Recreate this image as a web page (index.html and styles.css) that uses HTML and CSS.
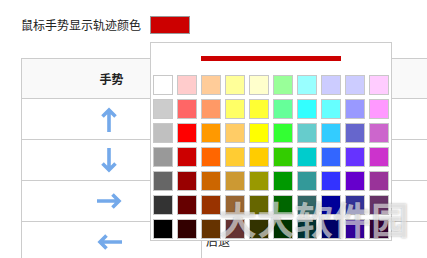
FILE: index.html
```html
<!DOCTYPE html>
<html lang="zh-CN">
<head>
<meta charset="utf-8">
<title>鼠标手势</title>
<link rel="stylesheet" href="styles.css">
</head>
<body>
<div class="setting">
  <span class="label">鼠标手势显示轨迹颜色</span>
  <span class="swatch"></span>
</div>

<div class="gtable">
  <div class="row head">
    <div class="c1">手势</div>
    <div class="c2">动作</div>
  </div>
  <div class="row">
    <div class="c1"><svg class="arrow v" width="16" height="25" viewBox="0 0 16 25"><path d="M8 3V25M1.5 9.5L8 3L14.5 9.5"/></svg></div>
    <div class="c2">向上滚动</div>
  </div>
  <div class="row">
    <div class="c1"><svg class="arrow v" width="16" height="25" viewBox="0 0 16 25"><path d="M8 0V22M1.5 15.5L8 22L14.5 15.5"/></svg></div>
    <div class="c2">向下滚动</div>
  </div>
  <div class="row">
    <div class="c1"><svg class="arrow h" width="25" height="16" viewBox="0 0 25 16"><path d="M0 8H22M15.5 1.5L22 8L15.5 14.5"/></svg></div>
    <div class="c2">前进</div>
  </div>
  <div class="row">
    <div class="c1"><svg class="arrow h" width="25" height="16" viewBox="0 0 25 16"><path d="M25 8H3M9.5 1.5L3 8L9.5 14.5"/></svg></div>
    <div class="c2">后退</div>
  </div>
</div>

<div class="picker">
  <div class="current"></div>
  <div class="grid">
    <span class="sw" style="background:#ffffff"></span><span class="sw" style="background:#ffcccc"></span><span class="sw" style="background:#ffcc99"></span><span class="sw" style="background:#ffff99"></span><span class="sw" style="background:#ffffcc"></span><span class="sw" style="background:#99ff99"></span><span class="sw" style="background:#99ffff"></span><span class="sw" style="background:#ccccff"></span><span class="sw" style="background:#ccccff"></span><span class="sw" style="background:#ffccff"></span>
    <span class="sw" style="background:#cccccc"></span><span class="sw" style="background:#ff6666"></span><span class="sw" style="background:#ff9966"></span><span class="sw" style="background:#ffff66"></span><span class="sw" style="background:#ffff33"></span><span class="sw" style="background:#66ff99"></span><span class="sw" style="background:#33ffff"></span><span class="sw" style="background:#66ffff"></span><span class="sw" style="background:#9999ff"></span><span class="sw" style="background:#ff99ff"></span>
    <span class="sw" style="background:#c0c0c0"></span><span class="sw" style="background:#ff0000"></span><span class="sw" style="background:#ff9900"></span><span class="sw" style="background:#ffcc66"></span><span class="sw" style="background:#ffff00"></span><span class="sw" style="background:#33ff33"></span><span class="sw" style="background:#66cccc"></span><span class="sw" style="background:#33ccff"></span><span class="sw" style="background:#6666cc"></span><span class="sw" style="background:#cc66cc"></span>
    <span class="sw" style="background:#999999"></span><span class="sw" style="background:#cc0000"></span><span class="sw" style="background:#ff6600"></span><span class="sw" style="background:#ffcc33"></span><span class="sw" style="background:#ffcc00"></span><span class="sw" style="background:#33cc00"></span><span class="sw" style="background:#00cccc"></span><span class="sw" style="background:#3366ff"></span><span class="sw" style="background:#6633ff"></span><span class="sw" style="background:#cc33cc"></span>
    <span class="sw" style="background:#666666"></span><span class="sw" style="background:#990000"></span><span class="sw" style="background:#cc6600"></span><span class="sw" style="background:#cc9933"></span><span class="sw" style="background:#999900"></span><span class="sw" style="background:#009900"></span><span class="sw" style="background:#339999"></span><span class="sw" style="background:#3333ff"></span><span class="sw" style="background:#6600cc"></span><span class="sw" style="background:#993399"></span>
    <span class="sw" style="background:#333333"></span><span class="sw" style="background:#660000"></span><span class="sw" style="background:#993300"></span><span class="sw" style="background:#996633"></span><span class="sw" style="background:#666600"></span><span class="sw" style="background:#006600"></span><span class="sw" style="background:#336666"></span><span class="sw" style="background:#000099"></span><span class="sw" style="background:#333399"></span><span class="sw" style="background:#663366"></span>
    <span class="sw" style="background:#000000"></span><span class="sw" style="background:#330000"></span><span class="sw" style="background:#663300"></span><span class="sw" style="background:#663333"></span><span class="sw" style="background:#333300"></span><span class="sw" style="background:#003300"></span><span class="sw" style="background:#003333"></span><span class="sw" style="background:#000066"></span><span class="sw" style="background:#330099"></span><span class="sw" style="background:#330033"></span>
  </div>
</div>

<div class="watermark">大大软件园</div>
</body>
</html>
```

FILE: styles.css
```css
html, body {
  margin: 0;
  padding: 0;
  background: #ffffff;
  overflow: hidden;
}
body {
  width: 427px;
  height: 258px;
  position: relative;
  font-family: "Noto Sans CJK SC", "Noto Sans", sans-serif;
  font-size: 12px;
  color: #222222;
}

.setting {
  display: flex;
  align-items: center;
  gap: 9px;
  margin: 16px 0 0 21px;
  height: 18px;
}
.label {
  line-height: 18px;
}
.swatch {
  display: block;
  box-sizing: border-box;
  width: 40px;
  height: 18px;
  border: 1px solid #999999;
  background: #cc0000;
}

.gtable {
  margin: 24px 0 0 21px;
  width: 520px;
  border: 1px solid #cccccc;
  border-bottom: none;
}
.row {
  display: flex;
  height: 40px;
  border-bottom: 1px solid #cccccc;
}
.row.head {
  height: 39px;
  background: #f9f9f9;
  font-weight: bold;
}
.c1 {
  box-sizing: border-box;
  width: 180px;
  border-right: 1px solid #cccccc;
  display: flex;
  align-items: center;
  justify-content: center;
}
.c2 {
  flex: 1;
  display: flex;
  align-items: center;
  padding: 0 0 3px 4px;
}
.arrow {
  display: block;
  margin-right: 5px;
}
.arrow path {
  fill: none;
  stroke: #74a9ea;
  stroke-width: 3.6;
}

.picker {
  position: absolute;
  left: 150px;
  top: 42px;
  box-sizing: border-box;
  width: 242px;
  height: 199px;
  border: 1px solid #cccccc;
  background: #ffffff;
  padding: 13px 2px 1px 2px;
}
.current {
  width: 140px;
  height: 5px;
  margin: 0 auto;
  background: #cc0000;
}
.grid {
  margin-top: 14px;
  display: grid;
  grid-template-columns: repeat(10, 20px);
  grid-auto-rows: 20px;
  gap: 4px;
}
.sw {
  display: block;
  box-sizing: border-box;
  border: 1px solid #c8c8c8;
}

.watermark {
  position: absolute;
  left: 219px;
  top: 199px;
  font-size: 38px;
  line-height: 1;
  font-weight: bold;
  color: rgba(255, 255, 255, 0.6);
  text-shadow: 0 0 2px rgba(0, 0, 0, 0.3);
  white-space: nowrap;
}
```
